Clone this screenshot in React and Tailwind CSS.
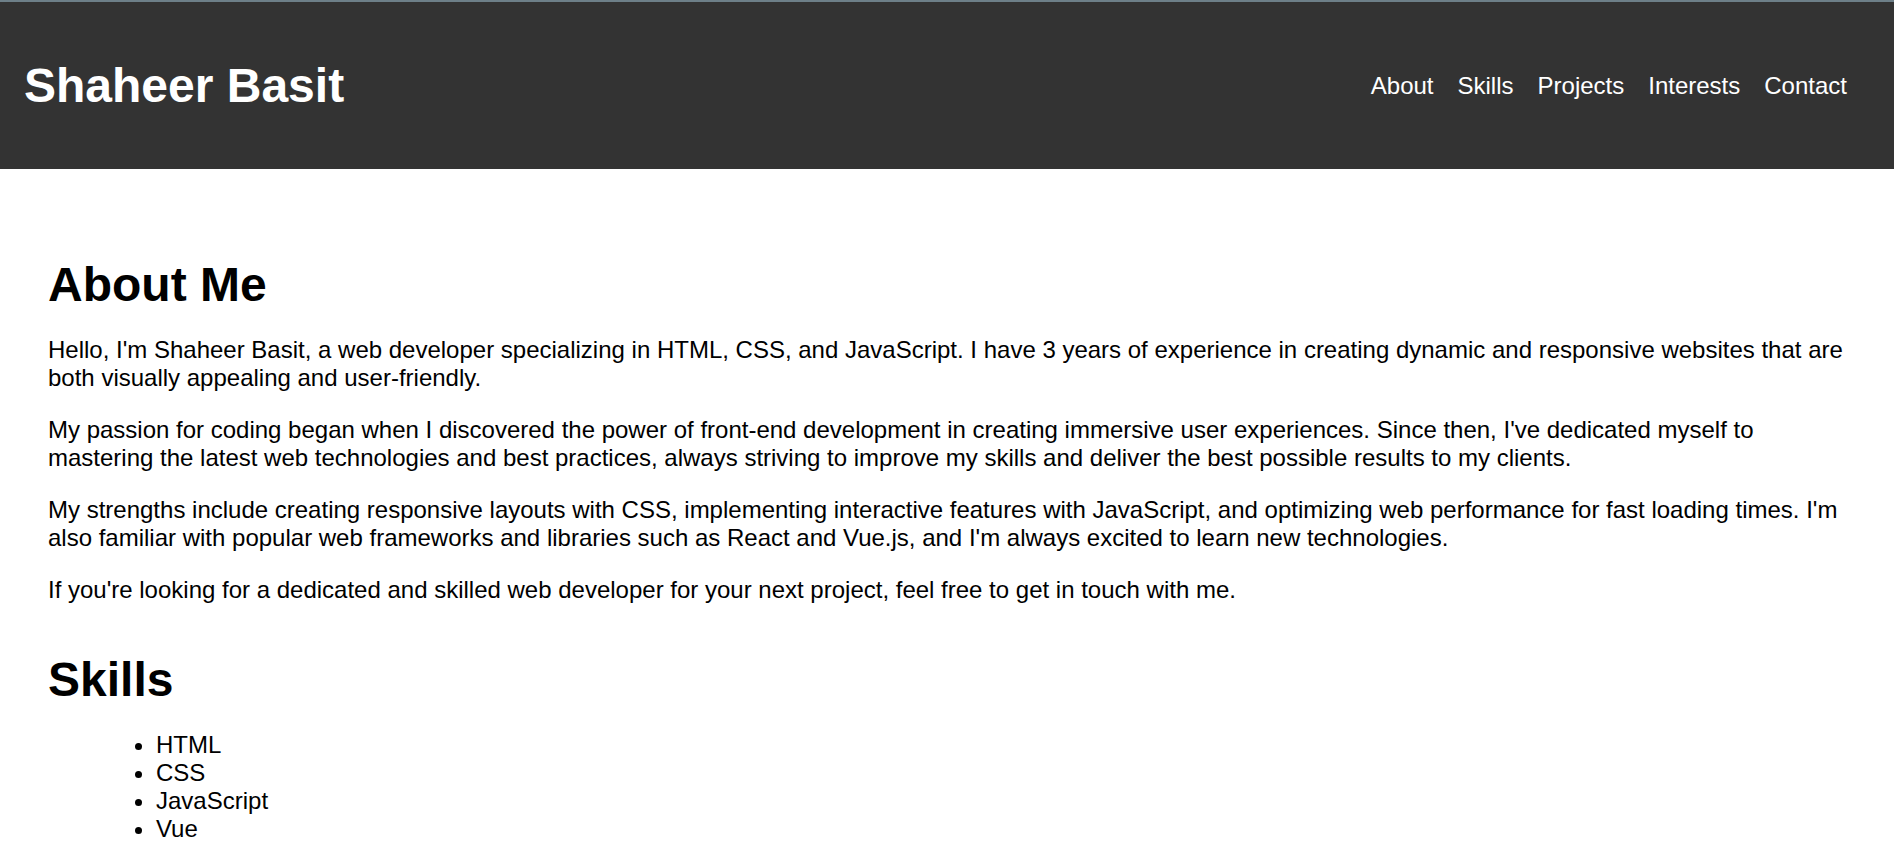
const links = ["About", "Skills", "Projects", "Interests", "Contact"];
const skills = ["HTML", "CSS", "JavaScript", "Vue"];

export default function App() {
  return (
    <div className="bg-white font-['Liberation_Sans',Arial,sans-serif] text-2xl leading-7 text-black">
      <header className="flex items-center justify-between border-t-2 border-[#6d7f88] bg-[#333333] py-14 pr-[47px] pl-6 text-white">
        <h1 className="text-5xl leading-[55px] font-bold">Shaheer Basit</h1>
        <nav>
          <ul className="flex gap-6">
            {links.map((label) => (
              <li key={label}>
                <a href={`#${label.toLowerCase()}`}>{label}</a>
              </li>
            ))}
          </ul>
        </nav>
      </header>
      <main className="px-12 pt-22">
        <section id="about">
          <h2 className="text-5xl leading-[55px] font-bold">About Me</h2>
          <div className="mt-6 flex flex-col gap-6">
            <p>Hello, I'm Shaheer Basit, a web developer specializing in HTML, CSS, and JavaScript. I have 3 years of experience in creating dynamic and responsive websites that are both visually appealing and user-friendly.</p>
            <p>My passion for coding began when I discovered the power of front-end development in creating immersive user experiences. Since then, I've dedicated myself to mastering the latest web technologies and best practices, always striving to improve my skills and deliver the best possible results to my clients.</p>
            <p>My strengths include creating responsive layouts with CSS, implementing interactive features with JavaScript, and optimizing web performance for fast loading times. I'm also familiar with popular web frameworks and libraries such as React and Vue.js, and I'm always excited to learn new technologies.</p>
            <p>If you're looking for a dedicated and skilled web developer for your next project, feel free to get in touch with me.</p>
          </div>
        </section>
        <section id="skills" className="mt-12">
          <h2 className="text-5xl leading-[55px] font-bold">Skills</h2>
          <ul className="mt-6 list-disc pl-27">
            {skills.map((skill) => (
              <li key={skill}>{skill}</li>
            ))}
          </ul>
        </section>
      </main>
    </div>
  );
}
